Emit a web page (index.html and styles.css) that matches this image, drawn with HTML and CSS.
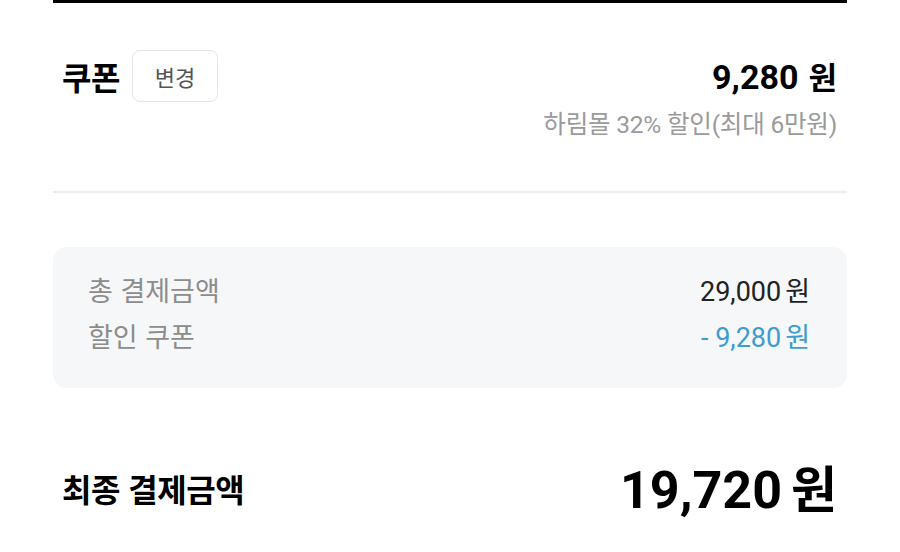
FILE: index.html
```html
<!DOCTYPE html>
<html lang="ko">
<head>
<meta charset="utf-8">
<link rel="stylesheet" href="styles.css">
</head>
<body>
<div class="page">
  <div class="topline"></div>
  <section class="coupon">
    <div class="coupon-head">
      <div class="coupon-title">
        <span class="title">쿠폰</span>
        <button class="change-btn">변경</button>
      </div>
      <div class="coupon-price"><span class="num">9,280</span><span class="unit">원</span></div>
    </div>
    <div class="coupon-desc">하림몰 32% 할인(최대 6만원)</div>
  </section>
  <div class="divider"></div>
  <section class="summary">
    <div class="sum-row">
      <span class="sum-label">총 결제금액</span>
      <span class="sum-value"><span class="num">29,000</span><span class="unit">원</span></span>
    </div>
    <div class="sum-row">
      <span class="sum-label">할인 쿠폰</span>
      <span class="sum-value discount"><span class="num">- 9,280</span><span class="unit">원</span></span>
    </div>
  </section>
  <section class="final">
    <span class="final-label">최종 결제금액</span>
    <span class="final-value"><span class="num">19,720</span><span class="unit">원</span></span>
  </section>
</div>
</body>
</html>
```

FILE: styles.css
```css
* { box-sizing: border-box; }
html, body { margin: 0; padding: 0; background: #fff; }
body {
  font-family: Roboto, "Noto Sans CJK KR", sans-serif;
  color: #111;
}
.page {
  width: 900px;
  padding: 0 53px;
}
.topline {
  height: 3px;
  background: #000;
}
.coupon {
  padding: 47px 10px 0 9px;
}
.coupon-head {
  display: flex;
  justify-content: space-between;
  align-items: center;
  height: 52px;
}
.coupon-title {
  display: flex;
  align-items: center;
  gap: 12px;
}
.title {
  font-family: "Noto Sans CJK KR", sans-serif;
  font-weight: 700;
  font-size: 32px;
  line-height: 40px;
  color: #000;
  letter-spacing: -0.5px;
}
.change-btn {
  width: 86px;
  height: 52px;
  border: 1.5px solid #e4e4e4;
  border-radius: 8px;
  background: #fff;
  font-family: "Noto Sans CJK KR", sans-serif;
  font-size: 22px;
  color: #555;
  padding: 0;
  margin-top: 0;
}
.coupon-price {
  font-weight: 700;
  color: #000;
  display: flex;
  align-items: baseline;
  gap: 10px;
  line-height: 40px;
}
.coupon-price .num { font-size: 34px; }
.coupon-price .unit { font-size: 31px; font-family: "Noto Sans CJK KR", sans-serif; }
.coupon-desc {
  margin-top: 8px;
  text-align: right;
  font-size: 24.5px;
  line-height: 30px;
  color: #9a9a9a;
  letter-spacing: -0.2px;
}
.divider {
  margin-top: 51px;
  height: 2px;
  background: #ececec;
}
.summary {
  margin-top: 54px;
  background: #f6f7f9;
  border-radius: 14px;
  padding: 19px 37px 30px 35px;
}
.sum-row {
  display: flex;
  justify-content: space-between;
  align-items: center;
  height: 46px;
}
.sum-label {
  font-family: "Noto Sans CJK KR", sans-serif;
  font-size: 27px;
  color: #8c8c8c;
}
.sum-value {
  display: flex;
  align-items: baseline;
  gap: 4px;
  color: #222;
}
.sum-value .num { font-size: 27px; }
.sum-value .unit { font-size: 27px; font-family: "Noto Sans CJK KR", sans-serif; }
.sum-value.discount { color: #3d9ccf; }
.final {
  margin-top: 70px;
  height: 60px;
  padding: 0 10px 0 9px;
  display: flex;
  justify-content: space-between;
  align-items: center;
}
.final-label {
  font-family: "Noto Sans CJK KR", sans-serif;
  font-weight: 700;
  font-size: 32px;
  color: #000;
  letter-spacing: -0.5px;
}
.final-value {
  display: flex;
  align-items: baseline;
  gap: 9px;
  font-weight: 700;
  color: #000;
  line-height: 60px;
}
.final-value .num { font-size: 52px; }
.final-value .unit { font-size: 50px; font-family: "Noto Sans CJK KR", sans-serif; }
```
